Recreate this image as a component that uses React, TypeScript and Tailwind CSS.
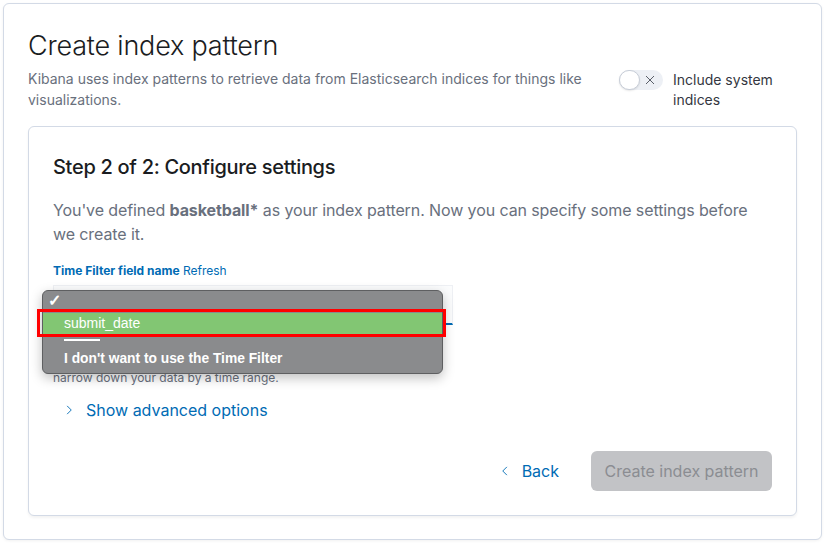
import React from 'react';

const ChevronRight = () => (
  <svg width="12" height="12" viewBox="0 0 16 16" fill="none" stroke="currentColor" strokeWidth="1.2">
    <path d="M5.5 2.5 L11 8 L5.5 13.5" />
  </svg>
);

const ChevronLeft = () => (
  <svg width="12" height="12" viewBox="0 0 16 16" fill="none" stroke="currentColor" strokeWidth="1.2">
    <path d="M10.5 2.5 L5 8 L10.5 13.5" />
  </svg>
);

const Cross = () => (
  <svg width="10" height="10" viewBox="0 0 10 10" fill="none" stroke="#5a5f69" strokeWidth="1">
    <path d="M1 1 L9 9 M9 1 L1 9" />
  </svg>
);

const App: React.FC = () => {
  return (
    <div className="w-[827px] h-[545px] bg-white p-[3px] font-['Inter',sans-serif] text-[#343741]">
      <div className="h-[537px] w-[819px] border border-[#d3dae6] rounded-[6px] bg-white shadow-[0_1px_3px_rgba(0,0,0,0.06)] px-[24px] pt-[24px]">
        <h1 className="text-[27px] leading-[36px] font-light text-[#1a1c21] tracking-[-0.2px]">Create index pattern</h1>
        <div className="flex items-start mt-[4px]">
          <p className="flex-1 text-[14px] leading-[21px] text-[#69707d] pr-[8px]">
            Kibana uses index patterns to retrieve data from Elasticsearch indices for things like visualizations.
          </p>
          <div className="w-[178px] flex items-start gap-[10px] mt-[2px]">
            <div className="w-[44px] h-[20px] rounded-full bg-[#edf0f5] relative shrink-0">
              <div className="absolute left-0 top-0 w-[21px] h-[20px] rounded-full bg-white border border-[#c8ced8] shadow-[0_1px_2px_rgba(0,0,0,0.1)]" />
              <div className="absolute left-[26px] top-[5px]">
                <Cross />
              </div>
            </div>
            <span className="text-[14px] leading-[20px] text-[#343741] w-[110px]">Include system indices</span>
          </div>
        </div>

        <div className="mt-[16px] h-[390px] border border-[#d3dae6] rounded-[6px] bg-white shadow-[0_2px_3px_rgba(0,0,0,0.05)] px-[24px] pt-[24px] pb-[24px] flex flex-col">
          <h2 className="text-[20px] leading-[32px] font-medium tracking-[-0.3px] text-[#1a1c21]">Step 2 of 2: Configure settings</h2>
          <p className="mt-[15px] text-[16px] leading-[24px] text-[#69707d] tracking-[-0.1px]">
            You've defined <span className="font-bold">basketball*</span> as your index pattern. Now you can specify some settings before we create it.
          </p>

          <div className="mt-[16px] text-[12px] leading-[18px]">
            <span className="font-bold text-[#006bb4]">Time Filter field name</span>{' '}
            <span className="text-[#006bb4]">Refresh</span>
          </div>

          <div className="relative mt-[5px] w-[400px]">
            <div className="h-[40px] bg-[#fbfcfd] border border-[#eef0f4] border-b-2 border-b-[#006bb4]" />
            <div className="mt-[8px] text-[12px] leading-[18px] text-[#69707d]">
              The Time Filter will use this field to filter your data by time.<br />
              You can choose not to have a time field, but you will not be able to<br />
              narrow down your data by a time range.
            </div>

            <div className="absolute left-[-11px] top-[5px] w-[401px] h-[84px] rounded-[6px] bg-[#8a8b8d] border border-[#5e5f61] shadow-[0_4px_12px_rgba(0,0,0,0.25)] font-['Liberation_Sans',sans-serif] text-white">
              <div className="h-[22px] pl-[5px] pt-[1px] text-[16px] leading-[18px] font-bold">✓</div>
              <div className="h-[21px] bg-[#82c673] pl-[21px] text-[14px] leading-[21px] font-medium">submit_date</div>
              <div className="ml-[21px] mt-[5px] w-[36px] h-[2px] bg-white" />
              <div className="pl-[21px] mt-[8px] text-[13.8px] leading-[20px] font-semibold">I don't want to use the Time Filter</div>
            </div>
            <div className="absolute left-[-16px] top-[24px] w-[409px] h-[28px] border-[3px] border-[#ff0000]" />
          </div>

          <button className="mt-[11px] flex items-center gap-[11px] pl-[10px] text-[16px] leading-[24px] text-[#006bb4] w-fit">
            <ChevronRight />
            <span>Show advanced options</span>
          </button>

          <div className="mt-auto flex justify-end items-center">
            <button className="flex items-center gap-[11px] text-[16px] text-[#006bb4] mr-[32px]">
              <ChevronLeft />
              <span>Back</span>
            </button>
            <button className="w-[181px] h-[40px] rounded-[6px] bg-[#c2c3c6] text-[16px] text-[#8b8d92]">Create index pattern</button>
          </div>
        </div>
      </div>
    </div>
  );
};

export default App;
